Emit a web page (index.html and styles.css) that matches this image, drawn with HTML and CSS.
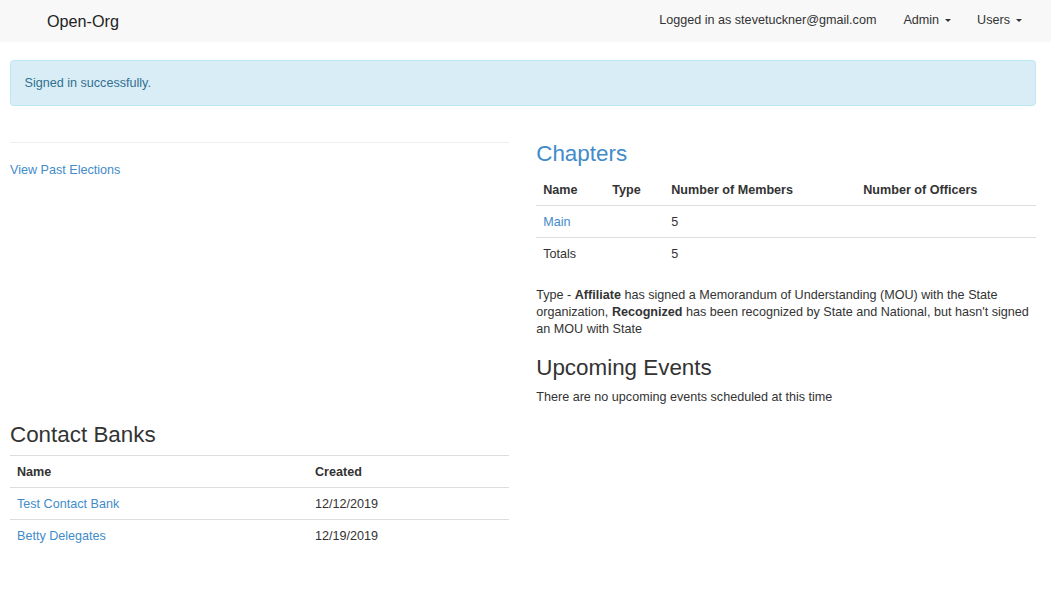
FILE: index.html
```html
<!DOCTYPE html>
<html lang="en">
<head>
<meta charset="utf-8">
<title>Open-Org</title>
<link rel="stylesheet" href="styles.css">
</head>
<body>
<nav class="navbar">
  <a class="brand" href="#">Open-Org</a>
  <ul class="nav">
    <li><a href="#">Logged in as stevetuckner@gmail.com</a></li>
    <li><a class="admin" href="#">Admin<span class="caret"></span></a></li>
    <li><a href="#">Users<span class="caret"></span></a></li>
  </ul>
</nav>
<main class="container">
  <div class="alert">Signed in successfully.</div>
  <div class="row">
    <div class="col">
      <hr class="divider">
      <p class="plain"><a href="#">View Past Elections</a></p>
    </div>
    <div class="col">
      <h3 class="heading chapters-title"><a href="#">Chapters</a></h3>
      <table class="table chapters">
        <thead>
          <tr><th class="c-name">Name</th><th class="c-type">Type</th><th class="c-members">Number of Members</th><th>Number of Officers</th></tr>
        </thead>
        <tbody>
          <tr><td><a href="#">Main</a></td><td></td><td>5</td><td></td></tr>
          <tr><td>Totals</td><td></td><td>5</td><td></td></tr>
        </tbody>
      </table>
      <p class="note">Type - <b>Affiliate</b> has signed a Memorandum of Understanding (MOU) with the State organization, <b>Recognized</b> has been recognized by State and National, but hasn't signed an MOU with State</p>
      <h3 class="heading events">Upcoming Events</h3>
      <div>There are no upcoming events scheduled at this time</div>
    </div>
  </div>
  <div class="row">
    <div class="col">
      <h3 class="heading banks">Contact Banks</h3>
      <table class="table banks-table">
        <thead>
          <tr><th class="b-name">Name</th><th>Created</th></tr>
        </thead>
        <tbody>
          <tr><td><a href="#">Test Contact Bank</a></td><td>12/12/2019</td></tr>
          <tr><td><a href="#">Betty Delegates</a></td><td>12/19/2019</td></tr>
        </tbody>
      </table>
    </div>
    <div class="col"></div>
  </div>
</main>
</body>
</html>
```
FILE: styles.css
```css
* { box-sizing: border-box; }

body {
  margin: 0;
  font-family: "Liberation Sans", Arial, Helvetica, sans-serif;
  font-size: 12.6px;
  line-height: 17px;
  color: #333;
  background: #fff;
}

a { color: #428bca; text-decoration: none; }

.navbar {
  height: 42px;
  background: #f8f8f8;
  display: flex;
  align-items: flex-start;
  justify-content: space-between;
  padding: 0 15.5px 0 47px;
  margin-bottom: 18px;
}

.brand {
  color: #222;
  font-size: 16.2px;
  line-height: 17px;
  padding-top: 13px;
}

.nav {
  list-style: none;
  margin: 0;
  padding: 0;
  display: flex;
}

.nav a {
  display: flex;
  align-items: center;
  color: #333;
  padding: 12px 13.5px 13px;
}

.nav a.admin { padding-right: 12.5px; }

.caret {
  display: inline-block;
  width: 0;
  height: 0;
  margin-left: 6px;
  border-top: 3.6px solid #333;
  border-left: 3.6px solid transparent;
  border-right: 3.6px solid transparent;
}

.container {
  padding: 0 15.5px 0 10px;
}

.alert {
  background: #d9edf7;
  border: 1px solid #bce8f1;
  color: #31708f;
  border-radius: 3.6px;
  padding: 13.5px 13.5px;
  margin-bottom: 18px;
}

.row {
  display: grid;
  grid-template-columns: 1fr 1fr;
  column-gap: 27px;
}

.col { min-width: 0; }

.divider {
  border: 0;
  border-top: 1px solid #eee;
  margin: 18px 0 19px;
}

.plain { margin: 0 0 9px; }

.heading {
  font-size: 22.4px;
  font-weight: 400;
  line-height: 22px;
  margin: 18px 0 9px;
}

.heading.chapters-title { margin-top: 19px; margin-bottom: 9px; }
.heading.events { margin-top: 19px; margin-bottom: 10px; }
.heading.banks { margin-top: 18px; }

.table {
  width: 100%;
  border-collapse: separate;
  border-spacing: 0;
  margin-bottom: 18px;
}

.table th,
.table td {
  text-align: left;
  vertical-align: top;
  padding: 8px 7px 6px;
  line-height: 17px;
}

.table th { font-weight: 700; }

.table td { border-top: 1px solid #ddd; }

.banks-table th { border-top: 1px solid #ddd; }

.c-name { width: 69px; }
.c-type { width: 59px; }
.c-members { width: 192px; }

.b-name { width: 298px; }

.note { margin: 0 0 9px; }
```
